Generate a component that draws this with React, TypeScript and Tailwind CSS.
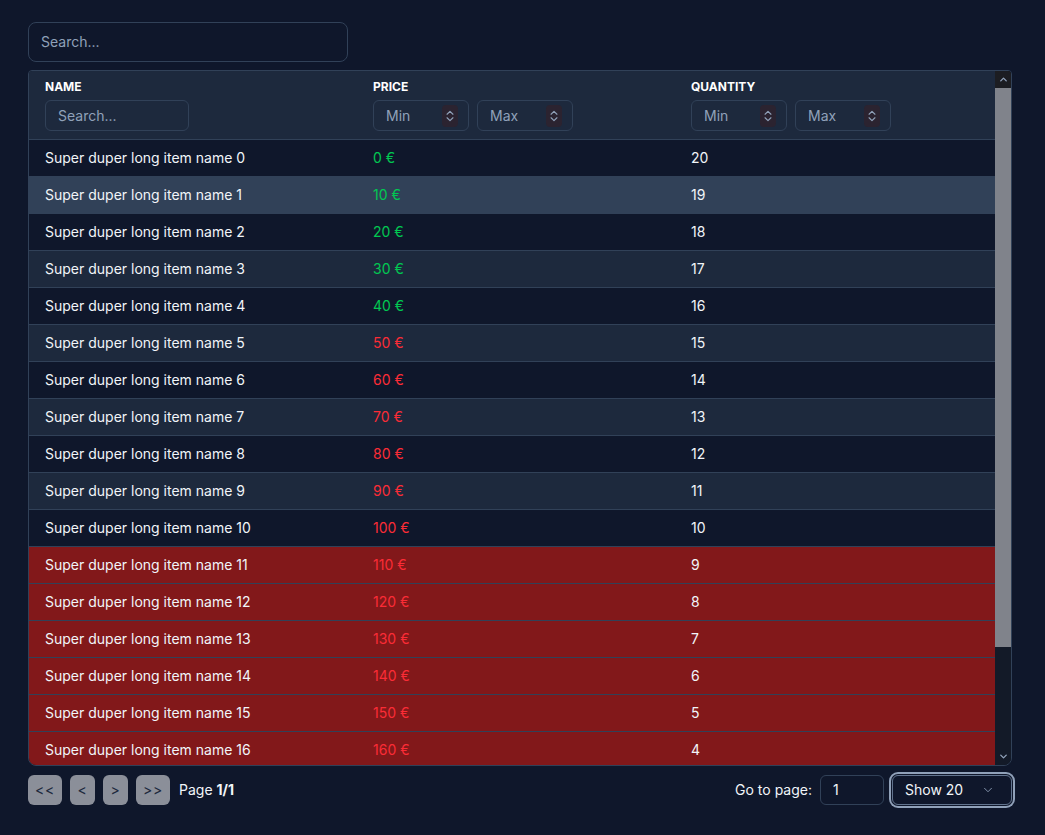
import { ChevronDown, ChevronsUpDown, ChevronUp } from "lucide-react";

type Item = { name: string; price: number; quantity: number };

const items: Item[] = Array.from({ length: 20 }, (_, i) => ({
  name: `Super duper long item name ${i}`,
  price: i * 10,
  quantity: 20 - i,
}));

function NumberFilter({ placeholder }: { placeholder: string }) {
  return (
    <div className="flex h-[31px] w-[96px] items-center justify-between rounded-md border border-slate-700 bg-slate-800 pl-3 pr-[10px] text-sm text-slate-400">
      <span>{placeholder}</span>
      <span className="flex h-[22px] w-[16px] items-center justify-center rounded-sm bg-[#2b2330] text-slate-400">
        <ChevronsUpDown size={14} strokeWidth={2} />
      </span>
    </div>
  );
}

function PageButton({ label, wide }: { label: string; wide?: boolean }) {
  return (
    <button
      className={`flex h-[30px] items-center justify-center rounded-md bg-[#8b8f99] px-0 text-sm tracking-wider text-slate-800 ${
        wide ? "w-[34px]" : "w-[25px]"
      }`}
    >
      {label}
    </button>
  );
}

export default function App() {
  const visible = items.slice(0, 17);

  return (
    <div
      className="min-h-screen bg-slate-900 px-7 pt-[22px] text-slate-100"
      style={{ fontFamily: "Inter, 'Noto Sans', sans-serif" }}
    >
      <div className="flex h-10 w-[320px] items-center rounded-lg border border-slate-700 bg-slate-900 px-3 text-sm text-slate-400">
        Search...
      </div>

      <div className="mt-2 flex h-[696px] w-[984px] overflow-hidden rounded-b-lg rounded-t-sm border border-slate-700">
        <div className="flex-1 overflow-hidden">
          <table className="w-full border-collapse text-left text-sm">
            <thead className="bg-slate-800">
              <tr className="border-b border-slate-700">
                <th className="w-[344px] px-4 pt-[8px] pb-2 align-top">
                  <div className="text-xs font-bold uppercase text-white">Name</div>
                  <div className="mt-[5px] flex h-[31px] w-[144px] items-center rounded-md border border-slate-700 bg-slate-800 px-3 text-sm font-normal text-slate-400">
                    Search...
                  </div>
                </th>
                <th className="w-[318px] pt-[8px] pb-2 align-top">
                  <div className="text-xs font-bold uppercase text-white">Price</div>
                  <div className="mt-[5px] flex gap-2 font-normal">
                    <NumberFilter placeholder="Min" />
                    <NumberFilter placeholder="Max" />
                  </div>
                </th>
                <th className="pt-[8px] pb-2 align-top">
                  <div className="text-xs font-bold uppercase text-white">Quantity</div>
                  <div className="mt-[5px] flex gap-2 font-normal">
                    <NumberFilter placeholder="Min" />
                    <NumberFilter placeholder="Max" />
                  </div>
                </th>
              </tr>
            </thead>
            <tbody>
              {visible.map((item, i) => {
                let bg = i % 2 === 0 ? "bg-slate-900" : "bg-slate-800";
                if (i === 1) bg = "bg-slate-700";
                if (item.quantity < 10) bg = "bg-red-900";
                return (
                  <tr key={i} className={`h-[37px] border-b border-slate-700 ${bg}`}>
                    <td className="px-4 text-slate-100">{item.name}</td>
                    <td className={item.price < 50 ? "text-green-500" : "text-red-500"}>{item.price} €</td>
                    <td className="text-slate-100">{item.quantity}</td>
                  </tr>
                );
              })}
            </tbody>
          </table>
        </div>

        {/* scrollbar */}
        <div className="flex w-[16px] flex-col bg-[#131a28]">
          <div className="flex h-[17px] items-center justify-center bg-[#1c1d22] text-slate-400">
            <ChevronUp size={11} strokeWidth={3} />
          </div>
          <div className="h-[559px] bg-[#80838b]" />
          <div className="flex-1" />
          <div className="flex h-[17px] items-center justify-center text-slate-400">
            <ChevronDown size={11} strokeWidth={3} />
          </div>
        </div>
      </div>

      <div className="mt-[9px] flex w-[984px] items-center justify-between">
        <div className="flex items-center gap-2 text-sm">
          <PageButton label="<<" wide />
          <PageButton label="<" />
          <PageButton label=">" />
          <PageButton label=">>" wide />
          <span className="ml-[1px] text-slate-100">
            Page <strong>1/1</strong>
          </span>
        </div>
        <div className="flex items-center gap-2 text-sm">
          <span className="text-slate-100">Go to page:</span>
          <div className="flex h-[30px] w-[64px] items-center rounded-md border border-slate-700 bg-slate-900 px-3 text-slate-100">
            1
          </div>
          <div className="flex h-[30px] w-[120px] items-center justify-between rounded-md border border-slate-500 bg-slate-900 pl-3 pr-4 text-slate-100 ring-2 ring-slate-400 ring-offset-1 ring-offset-slate-900">
            <span>Show 20</span>
            <ChevronDown size={14} strokeWidth={1.5} className="text-slate-400" />
          </div>
        </div>
      </div>
    </div>
  );
}
